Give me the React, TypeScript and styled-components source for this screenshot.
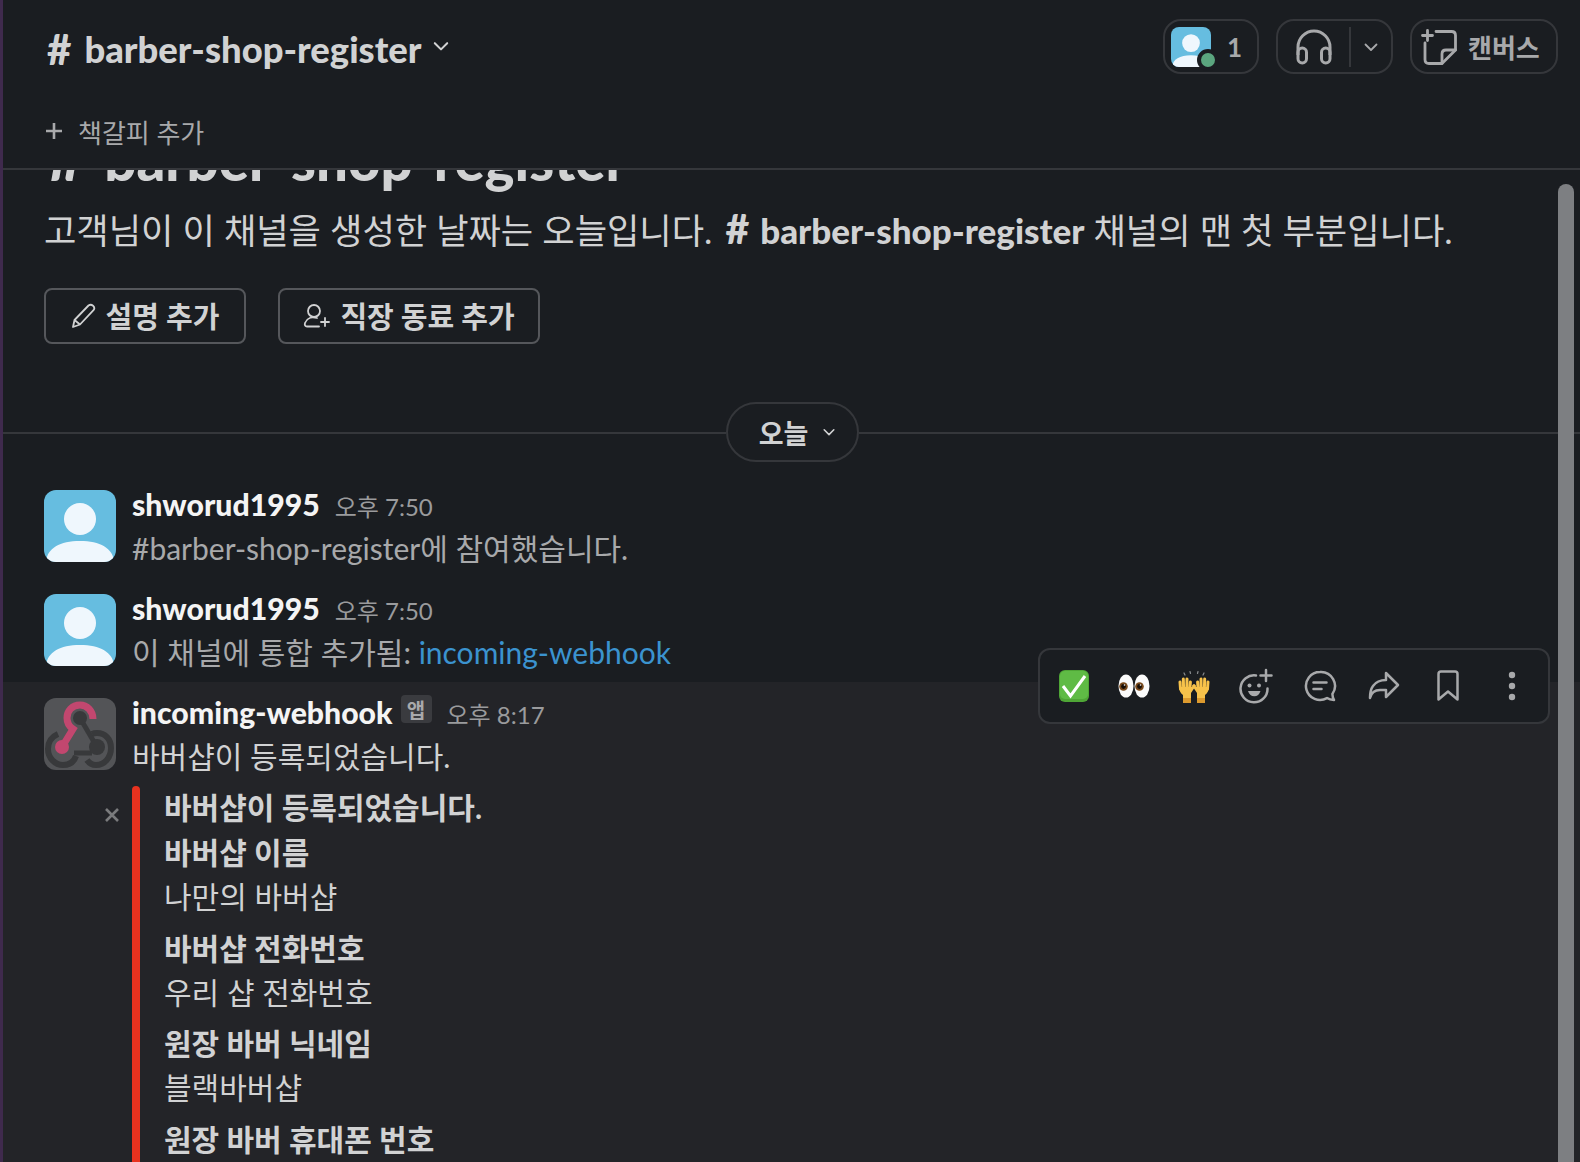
import styled, { createGlobalStyle } from 'styled-components'

const FONT = `Lato, 'Noto Sans CJK KR', sans-serif`

const GlobalStyle = createGlobalStyle`
  html, body {
    margin: 0;
    height: 100%;
    overflow: hidden;
    background: #1a1d21;
  }
  body {
    font-family: ${FONT};
    color: #d1d2d3;
  }
  * {
    box-sizing: border-box;
  }
`

const fields = [
  { label: '바버샵 이름', value: '나만의 바버샵' },
  { label: '바버샵 전화번호', value: '우리 샵 전화번호' },
  { label: '원장 바버 닉네임', value: '블랙바버샵' },
  { label: '원장 바버 휴대폰 번호', value: '010-0000-0000' },
]

function UserAvatarArt() {
  return (
    <svg width="100%" height="100%" viewBox="0 0 72 72">
      <rect width="72" height="72" fill="#66bde0" />
      <ellipse cx="36" cy="29" rx="16" ry="16" fill="#eff7fd" />
      <path d="M2 72c1-14 14-21 34-21s33 7 34 21z" fill="#eff7fd" />
    </svg>
  )
}

function WebhookArt() {
  return (
    <svg width="72" height="72" viewBox="0 0 72 72">
      <rect width="72" height="72" fill="#535457" />
      <g fill="none">
        <path d="M14 36C7 39 4 44 4 51c0 9 7 16 15 16 6 0 11-3 13-9" stroke="#38393b" strokeWidth="6" />
        <path d="M30 55h18" stroke="#38393b" strokeWidth="5" />
        <path d="M36 20l17 29" stroke="#38393b" strokeWidth="5" />
        <path d="M48 36c2-1 3-1 5-1 8 0 14 6 14 15s-6 17-15 17c-4 0-7-2-9-5" stroke="#38393b" strokeWidth="6" />
        <path d="M49 21c0-8-6-14-13-14-8 0-13 6-13 13 0 5 3 9 6 11L18 49" stroke="#c2476f" strokeWidth="7" />
      </g>
      <circle cx="36" cy="20" r="7" fill="#38393b" />
      <circle cx="53" cy="49" r="8" fill="#38393b" />
      <circle cx="18" cy="49" r="7" fill="#c2476f" />
    </svg>
  )
}

function CheckEmoji() {
  return (
    <svg width="32" height="32" viewBox="0 0 32 32">
      <rect x="1" width="30" height="32" rx="6" fill="#4fa636" />
      <rect x="2" y="1" width="28" height="28" rx="5" fill="#5fbb45" />
      <path d="M5 16l7.500 10L27 6" fill="none" stroke="#fff" strokeWidth="3" strokeLinejoin="miter" />
    </svg>
  )
}

function EyesEmoji() {
  return (
    <svg width="32" height="24" viewBox="0 0 32 24">
      <ellipse cx="8" cy="12" rx="7.500" ry="11.500" fill="#fbfbfb" />
      <ellipse cx="24" cy="12" rx="7.500" ry="11.500" fill="#fbfbfb" />
      <circle cx="5.500" cy="12.500" r="4.300" fill="#7a4a1c" />
      <circle cx="21.500" cy="12.500" r="4.300" fill="#7a4a1c" />
      <circle cx="5.500" cy="12.500" r="2.400" fill="#160c05" />
      <circle cx="21.500" cy="12.500" r="2.400" fill="#160c05" />
      <circle cx="6.500" cy="11" r=".8" fill="#fff" />
      <circle cx="22.500" cy="11" r=".8" fill="#fff" />
    </svg>
  )
}

function RaisedHand() {
  return (
    <g>
      <path d="M3.500 20 3 13M6.600 19l-.3-9M9.800 19l.2-9M12.800 20l.6-7" fill="none" stroke="#f7c24a" strokeWidth="3" strokeLinecap="round" />
      <path d="M2 18h12.500l3-3 1.500 1.500-5 7.500v5.500H6V26c-2.500-2-4-4.500-4-8z" fill="#f7c24a" />
      <rect x="6" y="29" width="8" height="5" fill="#dc9a2e" />
    </g>
  )
}

function HandsEmoji() {
  return (
    <svg width="34" height="34" viewBox="0 0 34 34">
      <path d="M7 4l1 2M13 2.500l.5 2M21 2.500l-.5 2M27 4l-1 2" stroke="#8b8d90" strokeWidth="1.200" strokeLinecap="round" />
      <RaisedHand />
      <g transform="translate(34 0) scale(-1 1)">
        <RaisedHand />
      </g>
    </svg>
  )
}

function ReactIcon() {
  return (
    <svg width="34" height="36" viewBox="0 0 34 36" fill="none" stroke="#a8a9ab" strokeWidth="2.500" strokeLinecap="round">
      <path d="M28.500 20.500A13.500 13.500 0 1 1 17 7.500" />
      <circle cx="10.500" cy="17.500" r="2" fill="#a8a9ab" stroke="none" />
      <circle cx="20" cy="17.500" r="2" fill="#a8a9ab" stroke="none" />
      <path d="M9 23h12.500c-1 3.500-3.300 5.300-6.200 5.300S10 26.500 9 23z" fill="#a8a9ab" stroke="none" />
      <path d="M27 2v11M21.500 7.500h11" />
    </svg>
  )
}

function ThreadIcon() {
  return (
    <svg width="34" height="34" viewBox="0 0 34 34" fill="none" stroke="#a8a9ab" strokeWidth="2.500" strokeLinecap="round" strokeLinejoin="round">
      <path d="M17 3a14 14 0 1 0 7 26.100c2 1.400 4.500 1.900 7 1.900-1-1.500-1.500-3.500-1.600-6A14 14 0 0 0 17 3z" />
      <path d="M10.500 13.500h13M10.500 20h8" />
    </svg>
  )
}

function ForwardIcon() {
  return (
    <svg width="32" height="30" viewBox="0 0 32 30" fill="none" stroke="#a8a9ab" strokeWidth="2.500" strokeLinejoin="round" strokeLinecap="round">
      <path d="M18 2l12 12-12 12v-7h-6c-5 0-8.500 2-10 8 0-2 0-8 3-12 2.500-3.500 6-6 13-6z" />
    </svg>
  )
}

function BookmarkIcon() {
  return (
    <svg width="22" height="32" viewBox="0 0 22 32" fill="none" stroke="#a8a9ab" strokeWidth="2.500" strokeLinejoin="round">
      <path d="M1.500 4c0-1.500 1-2.500 2.500-2.500h14c1.500 0 2.500 1 2.500 2.500v25.500L11 21.500 1.500 29.500z" />
    </svg>
  )
}

function KebabIcon() {
  return (
    <svg width="8" height="30" viewBox="0 0 8 30" fill="#a8a9ab">
      <circle cx="4" cy="4" r="3.200" />
      <circle cx="4" cy="15" r="3.200" />
      <circle cx="4" cy="26" r="3.200" />
    </svg>
  )
}

function Chevron({ size, color }: { size: number; color: string }) {
  return (
    <svg width={size} height={size} viewBox="0 0 16 16" fill="none" stroke={color} strokeWidth="1.800" strokeLinecap="round" strokeLinejoin="round">
      <path d="M2.500 5.500 8 11l5.500-5.500" />
    </svg>
  )
}

function HeadphonesIcon() {
  return (
    <svg width="36" height="36" viewBox="0 0 36 36" fill="none" stroke="#a8a9ab" strokeWidth="3">
      <path d="M2 26V18a16 16 0 0 1 32 0v8" />
      <rect x="2" y="19" width="8.500" height="15" rx="4.200" />
      <rect x="25.500" y="19" width="8.500" height="15" rx="4.200" />
    </svg>
  )
}

function CanvasIcon() {
  return (
    <svg width="36" height="36" viewBox="0 0 36 36" fill="none" stroke="#a8a9ab" strokeWidth="2.800" strokeLinecap="round" strokeLinejoin="round">
      <path d="M15 2.500h15.500c2.500 0 4 1.500 4 4V21L21 34.500H8c-2.500 0-4-1.500-4-4V14" />
      <path d="M34.500 21H25c-2.500 0-4 1.500-4 4v9.500" />
      <path d="M6.500 1.500v10M1.500 6.500h10" />
    </svg>
  )
}

function PencilIcon() {
  return (
    <svg width="26" height="26" viewBox="0 0 26 26" fill="none" stroke="#d1d2d3" strokeWidth="1.800" strokeLinejoin="round">
      <path d="M2 24l1.500-7L17.500 2.500c1.500-1 3-1 4.500.2 1.500 1.400 1.700 3 .5 4.500L9 21.500z" />
      <path d="M3.500 17 9 21.500" />
    </svg>
  )
}

function AddUserIcon() {
  return (
    <svg width="28" height="26" viewBox="0 0 28 26" fill="none" stroke="#d1d2d3" strokeWidth="1.800" strokeLinecap="round">
      <circle cx="11" cy="8" r="6" />
      <path d="M14 15c-5-1.500-10 0-12 5-.7 2 .3 3.500 2 3.500h12" />
      <path d="M22 15v8M18 19h8" />
    </svg>
  )
}

export default function App() {
  return (
    <>
      <GlobalStyle />
      <Shell>
        <Strip />
        <Main>
          <Header>
            <TitleRow>
              <Title>
                <Hash $size={42} $gap={13}>#</Hash>
                barber-shop-register
                <TitleChevron>
                  <Chevron size={18} color="#d1d2d3" />
                </TitleChevron>
              </Title>
              <Actions>
                <MembersButton>
                  <MemberAvatar>
                    <UserAvatarArt />
                    <StatusDot />
                  </MemberAvatar>
                  <Count>1</Count>
                </MembersButton>
                <HuddleButton>
                  <HuddleMain>
                    <HeadphonesIcon />
                  </HuddleMain>
                  <HuddleCaret>
                    <Chevron size={16} color="#a8a9ab" />
                  </HuddleCaret>
                </HuddleButton>
                <CanvasButton>
                  <CanvasIcon />
                  <span>캔버스</span>
                </CanvasButton>
              </Actions>
            </TitleRow>
            <BookmarkRow>
              <PlusMark>
                <svg width="18" height="18" viewBox="0 0 18 18" stroke="#a8a9ab" strokeWidth="2.600">
                  <path d="M9 1v16M1 9h16" />
                </svg>
              </PlusMark>
              <span>책갈피 추가</span>
            </BookmarkRow>
          </Header>

          <Scroller>
            <Intro>
              <IntroHeading>
                <Hash $size={66} $gap={19}>#</Hash>barber-shop-register
              </IntroHeading>
              <IntroText>
                고객님이 이 채널을 생성한 날짜는 오늘입니다.{' '}
                <ChannelMention>
                  <Hash $size={41} $gap={11}>#</Hash>barber-shop-register
                </ChannelMention>{' '}
                채널의 맨 첫 부분입니다.
              </IntroText>
              <IntroButtons>
                <OutlineButton $width={202}>
                  <PencilIcon />
                  <ButtonLabel>설명 추가</ButtonLabel>
                </OutlineButton>
                <OutlineButton $width={262}>
                  <AddUserIcon />
                  <ButtonLabel>직장 동료 추가</ButtonLabel>
                </OutlineButton>
              </IntroButtons>
            </Intro>

            <DateDivider>
              <DividerLine />
              <DatePill>
                오늘
                <Chevron size={14} color="#d1d2d3" />
              </DatePill>
              <DividerLine />
            </DateDivider>

            <MessageRow>
              <Avatar>
                <UserAvatarArt />
              </Avatar>
              <MessageBody>
                <MessageMeta>
                  <Sender>shworud1995</Sender>
                  <Time>오후 7:50</Time>
                </MessageMeta>
                <MutedLine>#barber-shop-register에 참여했습니다.</MutedLine>
              </MessageBody>
            </MessageRow>

            <MessageRow>
              <Avatar>
                <UserAvatarArt />
              </Avatar>
              <MessageBody>
                <MessageMeta>
                  <Sender>shworud1995</Sender>
                  <Time>오후 7:50</Time>
                </MessageMeta>
                <MutedLine>
                  이 채널에 통합 추가됨: <LinkText>incoming-webhook</LinkText>
                </MutedLine>
              </MessageBody>
            </MessageRow>

            <MessageRow $hovered>
              <Avatar>
                <WebhookArt />
              </Avatar>
              <MessageBody>
                <MessageMeta>
                  <Sender>incoming-webhook</Sender>
                  <AppBadge>앱</AppBadge>
                  <Time>오후 8:17</Time>
                </MessageMeta>
                <MessageLine>바버샵이 등록되었습니다.</MessageLine>
                <Attachment>
                  <CloseMark>
                    <svg width="16" height="16" viewBox="0 0 16 16" stroke="#7a7b7d" strokeWidth="2.600">
                      <path d="M2 2l12 12M14 2 2 14" />
                    </svg>
                  </CloseMark>
                  <AttachmentBar />
                  <AttachmentContent>
                    <AttachmentTitle>바버샵이 등록되었습니다.</AttachmentTitle>
                    {fields.map((f) => (
                      <Field key={f.label}>
                        <FieldLabel>{f.label}</FieldLabel>
                        <FieldValue>{f.value}</FieldValue>
                      </Field>
                    ))}
                  </AttachmentContent>
                </Attachment>
              </MessageBody>
            </MessageRow>

            <HoverToolbar>
              <EmojiButton>
                <CheckEmoji />
              </EmojiButton>
              <EmojiButton>
                <EyesEmoji />
              </EmojiButton>
              <EmojiButton>
                <HandsEmoji />
              </EmojiButton>
              <ToolButton>
                <ReactIcon />
              </ToolButton>
              <ToolButton>
                <ThreadIcon />
              </ToolButton>
              <ToolButton>
                <ForwardIcon />
              </ToolButton>
              <ToolButton>
                <BookmarkIcon />
              </ToolButton>
              <ToolButton>
                <KebabIcon />
              </ToolButton>
            </HoverToolbar>
            <ScrollThumb />
          </Scroller>
        </Main>
      </Shell>
    </>
  )
}

const Shell = styled.div`
  display: flex;
  height: 1162px;
  overflow: hidden;
`

const Strip = styled.div`
  flex: none;
  width: 3px;
  background: #3f2a4d;
`

const Main = styled.div`
  flex: 1;
  min-width: 0;
  display: flex;
  flex-direction: column;
`

const Header = styled.header`
  flex: none;
  height: 170px;
  border-bottom: 2px solid #35373b;
  background: #1a1d21;
  position: relative;
  z-index: 1;
`

const TitleRow = styled.div`
  display: flex;
  justify-content: space-between;
  align-items: flex-start;
  padding: 19px 22px 0 44px;
`

const Title = styled.div`
  display: flex;
  align-items: center;
  height: 60px;
  font-size: 36.4px;
  line-height: 1;
  font-weight: 900;
  color: #d1d2d3;
`

const Hash = styled.span<{ $size: number; $gap: number }>`
  display: inline-block;
  font-size: ${(p) => p.$size}px;
  line-height: 0;
  margin-right: ${(p) => p.$gap}px;
`

const TitleChevron = styled.span`
  display: flex;
  margin: -6px 0 0 10px;
`

const Actions = styled.div`
  display: flex;
  gap: 17px;
`

const HeaderButton = styled.div`
  display: flex;
  align-items: center;
  height: 55px;
  border: 2px solid #35373b;
  border-radius: 18px;
  color: #a8a9ab;
  font-size: 26px;
  font-weight: 700;
`

const MembersButton = styled(HeaderButton)`
  width: 96px;
  padding-left: 6px;
`

const MemberAvatar = styled.div`
  position: relative;
  width: 40px;
  height: 40px;
  border-radius: 8px;
  overflow: visible;

  & > svg {
    border-radius: 8px;
    display: block;
  }
`

const StatusDot = styled.span`
  position: absolute;
  right: -8px;
  bottom: -4px;
  width: 22px;
  height: 22px;
  border-radius: 50%;
  background: #5ba67f;
  border: 4px solid #1a1d21;
`

const Count = styled.span`
  margin-left: 16px;
`

const HuddleButton = styled(HeaderButton)`
  width: 117px;
`

const HuddleMain = styled.div`
  display: flex;
  justify-content: center;
  align-items: center;
  width: 73px;
  height: 40px;
  border-right: 2px solid #35373b;
`

const HuddleCaret = styled.div`
  flex: 1;
  display: flex;
  justify-content: center;
`

const CanvasButton = styled(HeaderButton)`
  width: 148px;
  gap: 11px;
  padding-left: 9px;
`

const BookmarkRow = styled.div`
  display: flex;
  align-items: center;
  gap: 15px;
  margin-top: 32px;
  padding-left: 42px;
  height: 40px;
  font-size: 26px;
  color: #a8a9ab;
`

const PlusMark = styled.span`
  display: flex;
  align-items: center;
  justify-content: center;
  width: 18px;
`

const Scroller = styled.div`
  flex: 1;
  min-height: 0;
  position: relative;
  overflow: hidden;
`

const Intro = styled.div`
  padding-left: 41px;
  margin-top: -42px;
`

const IntroHeading = styled.div`
  padding-left: 3px;
  height: 62px;
  font-size: 56.4px;
  line-height: 62px;
  font-weight: 900;
  color: #d1d2d3;
  white-space: nowrap;
`

const IntroText = styled.div`
  margin-top: 12px;
  font-size: 35.2px;
  line-height: 56px;
  color: #d1d2d3;
  white-space: nowrap;
`

const ChannelMention = styled.span`
  margin-left: 4px;
  font-weight: 900;
  font-size: 35px;
`

const IntroButtons = styled.div`
  display: flex;
  gap: 32px;
  margin-top: 30px;
`

const OutlineButton = styled.div<{ $width: number }>`
  display: flex;
  align-items: center;
  justify-content: center;
  gap: 9px;
  width: ${(p) => p.$width}px;
  height: 56px;
  border: 2px solid #55575b;
  border-radius: 8px;
  color: #d1d2d3;
`

const ButtonLabel = styled.span`
  font-size: 29px;
  font-weight: 700;
  margin-top: -3px;
`

const DateDivider = styled.div`
  display: flex;
  align-items: center;
  margin: 58px -2px 12px 0;
`

const DividerLine = styled.div`
  flex: 1;
  height: 2px;
  margin-top: 2px;
  background: #35373b;
`

const DatePill = styled.div`
  flex: none;
  display: flex;
  align-items: center;
  justify-content: center;
  gap: 14px;
  width: 133px;
  height: 60px;
  padding-left: 10px;
  border: 2px solid #35373b;
  border-radius: 30px;
  font-size: 27px;
  font-weight: 700;
  color: #d1d2d3;
`

const MessageRow = styled.div<{ $hovered?: boolean }>`
  display: flex;
  gap: 16px;
  padding: 16px 0 8px 41px;
  background: ${(p) => (p.$hovered ? '#232428' : 'transparent')};
  ${(p) => p.$hovered && 'flex: 1; min-height: 500px;'}
`

const Avatar = styled.div`
  flex: none;
  width: 72px;
  height: 72px;
  border-radius: 12px;
  overflow: hidden;

  & > svg {
    display: block;
  }
`

const MessageBody = styled.div`
  flex: 1;
  min-width: 0;
  margin-top: -8px;
`

const MessageMeta = styled.div`
  display: flex;
  align-items: center;
  height: 44px;
`

const Sender = styled.span`
  font-size: 30.2px;
  font-weight: 900;
  color: #f4f4f4;
`

const Time = styled.span`
  margin-left: 15px;
  font-size: 24px;
  color: #9a9b9d;
  padding-top: 2px;
`

const AppBadge = styled.span`
  display: flex;
  align-items: center;
  justify-content: center;
  width: 31px;
  height: 28px;
  margin: -6px 0 0 8px;
  border-radius: 4px;
  background: #3a3b3f;
  font-size: 20px;
  font-weight: 700;
  color: #a8a9ab;
`

const MessageLine = styled.div`
  font-size: 30px;
  line-height: 44px;
  color: #d1d2d3;
`

const MutedLine = styled(MessageLine)`
  color: #a8a9ab;
`

const LinkText = styled.span`
  color: #3b93cf;
`

const Attachment = styled.div`
  position: relative;
  display: flex;
  margin-top: 8px;
`

const CloseMark = styled.span`
  position: absolute;
  left: -28px;
  top: 21px;
  display: flex;
`

const AttachmentBar = styled.div`
  flex: none;
  width: 8px;
  border-radius: 4px;
  background: #e8321f;
`

const AttachmentContent = styled.div`
  padding-left: 24px;
  padding-bottom: 200px;
  margin-top: -1px;
`

const FieldLabel = styled.div`
  font-size: 30px;
  line-height: 44px;
  font-weight: 700;
  color: #d1d2d3;
`

const AttachmentTitle = styled(FieldLabel)`
  margin-bottom: 1px;
`

const Field = styled.div`
  padding-bottom: 7.5px;
`

const FieldValue = styled.div`
  font-size: 30px;
  line-height: 44px;
  color: #d1d2d3;
`

const HoverToolbar = styled.div`
  position: absolute;
  top: 478px;
  right: 30px;
  display: flex;
  align-items: center;
  width: 512px;
  height: 76px;
  padding-left: 4px;
  border: 2px solid #35373b;
  border-radius: 12px;
  background: #1a1d21;
`

const EmojiButton = styled.div`
  flex: none;
  display: flex;
  align-items: center;
  justify-content: center;
  width: 60px;
`

const ToolButton = styled.div`
  flex: none;
  display: flex;
  align-items: center;
  justify-content: center;
  width: 64px;
`

const ScrollThumb = styled.div`
  position: absolute;
  top: 14px;
  right: 6px;
  bottom: -20px;
  width: 16px;
  border-radius: 8px;
  background: #7d7f82;
`
